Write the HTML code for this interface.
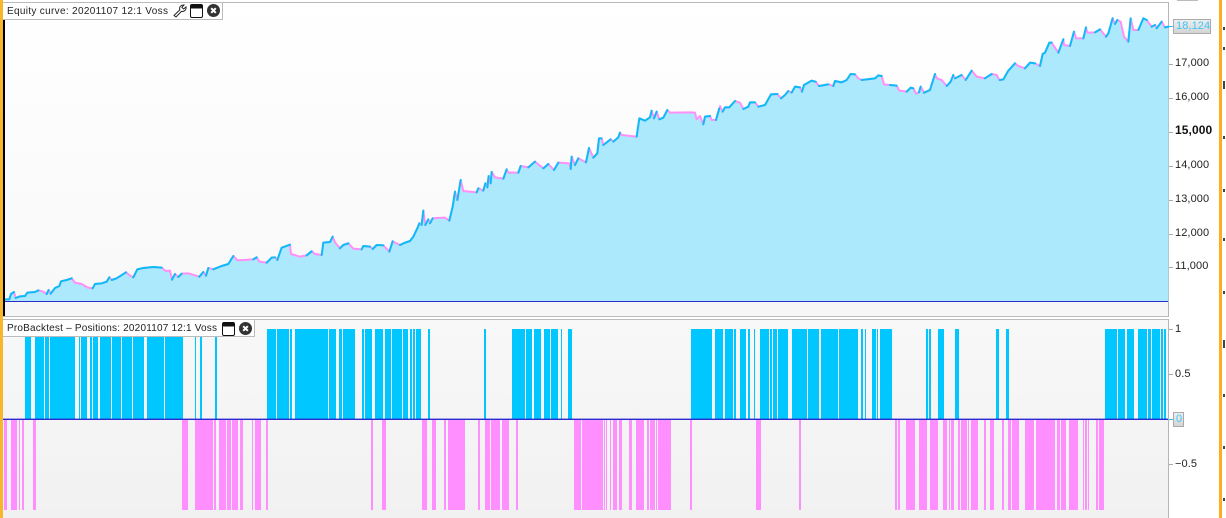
<!DOCTYPE html>
<html><head><meta charset="utf-8">
<style>
html,body{margin:0;padding:0;background:#fff}
body{width:1226px;height:518px;overflow:hidden;position:relative;font-family:"Liberation Sans",sans-serif;color:#222}
.a{position:absolute}
.t{position:absolute;left:1175px;font-size:11px;line-height:14px;letter-spacing:.1px;color:#222;white-space:nowrap}
.tick{position:absolute;left:1169px;width:4px;height:1px;background:#aaa}
.title{position:absolute;left:3px;height:16px;background:#fff;border-right:1px solid #bbb;border-bottom:1px solid #bbb;box-sizing:content-box}
.title span{position:absolute;left:4px;top:2px;font-size:10px;line-height:13px;color:#222;white-space:nowrap}
.m{position:absolute;left:1223px;width:2px;height:3px;background:#444}
</style></head><body>
<div class="a" style="left:0;top:0;width:3px;height:518px;background:#f8b62a"></div>
<div class="a" style="left:3px;top:2px;width:1165px;height:298px;background:linear-gradient(#fff,#f8f8f8)"></div>
<div class="a" style="left:3px;top:302px;width:1165px;height:14px;background:#f6f6f6"></div>
<div class="a" style="left:3px;top:320px;width:1165px;height:198px;background:linear-gradient(#f8f8f8,#f1f1f1)"></div>
<div class="a" style="left:3px;top:2px;width:1166px;height:1px;background:#bbb"></div>
<div class="a" style="left:3px;top:316px;width:1166px;height:1px;background:#bbb"></div>
<div class="a" style="left:3px;top:319px;width:1166px;height:1px;background:#bbb"></div>
<div class="a" style="left:1168px;top:2px;width:1px;height:315px;background:#b5b5b5"></div>
<div class="a" style="left:1168px;top:319px;width:1px;height:199px;background:#b5b5b5"></div>

<svg class="a" style="left:0;top:0" width="1226" height="518" viewBox="0 0 1226 518">
<g fill="#ade9fd" stroke="none">
<polygon transform="translate(0 180) scale(.33333)" points="15,363 15,358 28,358 33,342 42,336 47,354 60,349 75,348 82,338 105,336 115,331 130,335 140,342 146,330 152,341 165,324 178,318 183,304 200,300 215,295 225,308 245,312 262,322 278,325 285,312 305,310 320,305 328,292 335,300 350,295 378,277 392,288 400,292 412,268 430,264 460,261 485,263 497,273 510,272 516,299 525,282 535,291 545,281 565,280 598,290 610,276 618,287 625,264 640,268 665,258 685,252 700,228 712,241 760,238 770,232 778,245 800,248 815,233 825,232 832,240 845,203 870,194 873,222 900,230 920,226 935,214 945,222 965,225 970,188 990,186 998,170 1005,187 1020,205 1030,195 1045,190 1060,206 1085,208 1090,198 1110,200 1118,207 1130,195 1150,196 1168,215 1178,184 1200,195 1200,363"/>
<polygon transform="translate(400 80) scale(.33333)" points="0,663 0,495 15,488 30,483 40,470 52,445 58,430 65,435 70,392 76,435 85,418 90,430 98,415 110,414 135,413 148,422 158,380 165,335 172,360 178,325 182,300 190,333 230,337 235,325 250,332 256,310 262,322 266,288 272,310 275,276 285,292 310,296 320,268 325,278 355,278 362,258 385,262 405,245 430,265 445,252 462,270 475,248 508,250 512,267 515,230 525,255 535,235 558,247 567,204 580,233 592,220 597,175 605,175 610,195 632,178 640,185 655,172 660,158 665,165 692,168 710,170 718,115 735,122 750,112 755,92 762,115 770,95 778,118 790,113 802,90 810,98 870,97 885,98 890,118 900,108 910,133 915,110 930,108 935,120 948,120 958,85 960,85 960,663"/>
<polygon transform="translate(720 50) scale(.33333)" points="0,753 0,168 8,185 15,172 28,172 45,153 60,158 70,177 85,170 90,157 105,157 115,170 135,165 153,133 172,132 183,145 195,135 205,123 215,128 225,110 240,112 246,125 252,105 275,92 287,95 297,108 325,103 340,108 345,93 365,97 380,90 392,72 405,73 415,85 425,90 465,85 475,76 485,78 492,103 510,105 530,107 538,122 560,125 572,113 580,115 588,131 597,127 602,110 612,128 630,120 645,72 650,85 665,90 680,108 692,95 700,75 705,85 725,75 737,90 755,62 770,80 795,85 815,72 830,75 838,90 840,90 840,753"/>
<polygon transform="translate(1000 0) scale(.33333)" points="0,903 0,240 10,238 25,212 45,190 55,198 75,205 90,188 105,190 120,198 128,162 135,158 148,128 155,128 175,158 190,118 192,135 210,138 222,95 228,115 250,115 258,82 262,98 285,97 300,88 318,110 325,100 338,55 345,72 352,60 362,65 372,110 385,125 392,55 400,90 415,90 430,55 440,60 455,80 465,75 470,85 485,65 495,82 505,80 505,903"/>
</g>
<g fill="none" stroke-width="6" stroke-linejoin="round" stroke-linecap="round">
<g transform="translate(0 180) scale(.33333)">
<polyline stroke="#ff90f6" points="15,358 28,358 33,342 42,336 47,354 60,349 75,348 82,338 105,336 115,331 130,335 140,342 146,330 152,341 165,324 178,318 183,304 200,300 215,295 225,308 245,312 262,322 278,325 285,312 305,310 320,305 328,292 335,300 350,295 378,277 392,288 400,292 412,268 430,264 460,261 485,263 497,273 510,272 516,299 525,282 535,291 545,281 565,280 598,290 610,276 618,287 625,264 640,268 665,258 685,252 700,228 712,241 760,238 770,232 778,245 800,248 815,233 825,232 832,240 845,203 870,194 873,222 900,230 920,226 935,214 945,222 965,225 970,188 990,186 998,170 1005,187 1020,205 1030,195 1045,190 1060,206 1085,208 1090,198 1110,200 1118,207 1130,195 1150,196 1168,215 1178,184 1200,195"/>
<path stroke="#0cbcf7" d="M15 358L28 358L33 342L42 336M47 354L60 349L75 348L82 338L105 336L115 331M140 342L146 330M152 341L165 324L178 318L183 304L200 300L215 295M278 325L285 312L305 310L320 305L328 292M335 300L350 295L378 277M400 292L412 268L430 264L460 261L485 263M516 299L525 282M535 291L545 281M598 290L610 276M618 287L625 264M640 268L665 258L685 252L700 228M760 238L770 232M800 248L815 233L825 232M832 240L845 203L870 194M920 226L935 214M965 225L970 188L990 186L998 170M1020 205L1030 195L1045 190M1085 208L1090 198L1110 200M1118 207L1130 195L1150 196M1168 215L1178 184"/>
</g>
<g transform="translate(400 80) scale(.33333)">
<polyline stroke="#ff90f6" points="0,495 15,488 30,483 40,470 52,445 58,430 65,435 70,392 76,435 85,418 90,430 98,415 110,414 135,413 148,422 158,380 165,335 172,360 178,325 182,300 190,333 230,337 235,325 250,332 256,310 262,322 266,288 272,310 275,276 285,292 310,296 320,268 325,278 355,278 362,258 385,262 405,245 430,265 445,252 462,270 475,248 508,250 512,267 515,230 525,255 535,235 558,247 567,204 580,233 592,220 597,175 605,175 610,195 632,178 640,185 655,172 660,158 665,165 692,168 710,170 718,115 735,122 750,112 755,92 762,115 770,95 778,118 790,113 802,90 810,98 870,97 885,98 890,118 900,108 910,133 915,110 930,108 935,120 948,120 958,85"/>
<path stroke="#0cbcf7" d="M0 495L15 488L30 483L40 470L52 445L58 430M65 435L70 392M76 435L85 418M90 430L98 415M148 422L158 380L165 335M172 360L178 325L182 300M230 337L235 325M250 332L256 310M262 322L266 288M272 310L275 276M310 296L320 268M355 278L362 258M385 262L405 245M430 265L445 252M462 270L475 248M512 267L515 230M525 255L535 235M558 247L567 204M580 233L592 220L597 175L605 175M610 195L632 178M640 185L655 172L660 158M710 170L718 115L735 122L750 112L755 92M762 115L770 95M778 118L790 113L802 90M910 133L915 110L930 108M948 120L958 85"/>
</g>
<g transform="translate(720 50) scale(.33333)">
<polyline stroke="#ff90f6" points="0,168 8,185 15,172 28,172 45,153 60,158 70,177 85,170 90,157 105,157 115,170 135,165 153,133 172,132 183,145 195,135 205,123 215,128 225,110 240,112 246,125 252,105 275,92 287,95 297,108 325,103 340,108 345,93 365,97 380,90 392,72 405,73 415,85 425,90 465,85 475,76 485,78 492,103 510,105 530,107 538,122 560,125 572,113 580,115 588,131 597,127 602,110 612,128 630,120 645,72 650,85 665,90 680,108 692,95 700,75 705,85 725,75 737,90 755,62 770,80 795,85 815,72 830,75 838,90"/>
<path stroke="#0cbcf7" d="M8 185L15 172L28 172L45 153M70 177L85 170L90 157L105 157M115 170L135 165L153 133L172 132M183 145L195 135L205 123M215 128L225 110L240 112M246 125L252 105L275 92L287 95M297 108L325 103M340 108L345 93L365 97L380 90L392 72L405 73M425 90L465 85L475 76L485 78M510 105L530 107M560 125L572 113L580 115M597 127L602 110M612 128L630 120L645 72M680 108L692 95L700 75M705 85L725 75M737 90L755 62M795 85L815 72"/>
</g>
<g transform="translate(1000 0) scale(.33333)">
<polyline stroke="#ff90f6" points="0,240 10,238 25,212 45,190 55,198 75,205 90,188 105,190 120,198 128,162 135,158 148,128 155,128 175,158 190,118 192,135 210,138 222,95 228,115 250,115 258,82 262,98 285,97 300,88 318,110 325,100 338,55 345,72 352,60 362,65 372,110 385,125 392,55 400,90 415,90 430,55 440,60 455,80 465,75 470,85 485,65 495,82 505,80"/>
<path stroke="#0cbcf7" d="M0 240L10 238L25 212L45 190M75 205L90 188L105 190M120 198L128 162L135 158L148 128L155 128M175 158L190 118M210 138L222 95M250 115L258 82M285 97L300 88M318 110L325 100L338 55M345 72L352 60M385 125L392 55M415 90L430 55L440 60M455 80L465 75M470 85L485 65M495 82L505 80"/>
</g>
</g>
<rect x="3" y="301" width="1165" height="1" fill="#2b2bd0"/>
<path fill="none" stroke="#00c7ff" stroke-width="90" shape-rendering="crispEdges" d="M25 374H31M35 374H44M45 374H49M50 374H75M79 374H80M81 374H87M90 374H92M93 374H98M100 374H111M112 374H121M122 374H132M133 374H144M147 374H164M165 374H183M195 374H196M200 374H202M215 374H217M267 374H276M277 374H289M290 374H292M295 374H328M329 374H336M339 374H342M343 374H355M362 374H364M365 374H372M375 374H383M385 374H391M392 374H402M403 374H408M410 374H412M413 374H415M416 374H421M428 374H430M484 374H486M512 374H525M526 374H532M534 374H541M544 374H550M551 374H558M561 374H562M568 374H572M691 374H712M715 374H723M725 374H733M734 374H736M740 374H746M748 374H750M754 374H755M760 374H769M770 374H772M773 374H777M778 374H788M792 374H807M808 374H819M821 374H838M839 374H858M861 374H863M865 374H866M872 374H876M877 374H878M880 374H892M926 374H928M929 374H931M938 374H944M955 374H959M996 374H999M1006 374H1009M1105 374H1117M1118 374H1125M1127 374H1134M1138 374H1147M1148 374H1151M1152 374H1160M1161 374H1163M1164 374H1166"/>
<path fill="none" stroke="#ff8fff" stroke-width="90" shape-rendering="crispEdges" d="M4 465H7M11 465H17M19 465H20M22 465H24M33 465H36M182 465H188M195 465H213M214 465H216M219 465H226M227 465H231M232 465H238M240 465H243M252 465H253M255 465H261M266 465H268M371 465H373M382 465H386M422 465H427M432 465H436M444 465H446M448 465H465M478 465H480M485 465H490M491 465H500M502 465H509M516 465H518M574 465H581M582 465H603M604 465H605M606 465H607M610 465H611M613 465H617M619 465H622M629 465H632M636 465H644M647 465H649M650 465H655M656 465H657M658 465H671M690 465H692M756 465H761M799 465H801M895 465H897M898 465H900M906 465H915M919 465H927M930 465H938M943 465H947M949 465H950M951 465H954M958 465H960M961 465H967M968 465H969M971 465H978M984 465H986M990 465H994M1002 465H1004M1008 465H1011M1012 465H1019M1025 465H1034M1036 465H1055M1057 465H1060M1061 465H1066M1069 465H1078M1083 465H1084M1085 465H1087M1088 465H1089M1096 465H1098M1099 465H1104"/>
<rect x="3" y="418.6" width="1165" height="1.4" fill="#2b2bd0"/>
</svg>

<div class="a" style="left:3px;top:19px;width:2px;height:297px;background:#000"></div>

<div class="title" style="top:3px;width:219px"><span style="letter-spacing:.32px">Equity curve: 20201107 12:1 Voss</span>
<svg class="a" style="left:170px;top:1px" width="14" height="14" viewBox="0 0 14 14"><path d="M1 11.5L6.8 5.8C6 3 8 .6 11 1L8.9 3.3L10.6 5L13 3C13.5 6 11 8 8.4 7.4L3 13Z" fill="#fff" stroke="#222" stroke-width="1"/></svg>
<svg class="a" style="left:187px;top:1px" width="13" height="14" viewBox="0 0 13 14"><rect x=".5" y=".5" width="12" height="13" rx="1.5" fill="#fff" stroke="#111"/><rect x=".5" y=".5" width="12" height="4" rx="1" fill="#111"/></svg>
<svg class="a" style="left:204px;top:1px" width="13" height="13" viewBox="0 0 13 13"><circle cx="6.5" cy="6.5" r="6.5" fill="#333"/><path d="M4.2 4.2L8.8 8.8M8.8 4.2L4.2 8.8" stroke="#fff" stroke-width="2"/></svg>
</div>

<div class="title" style="top:320px;width:251px"><span style="letter-spacing:.2px">ProBacktest – Positions: 20201107 12:1 Voss</span>
<svg class="a" style="left:219px;top:2px" width="13" height="14" viewBox="0 0 13 14"><rect x=".5" y=".5" width="12" height="13" rx="1.5" fill="#fff" stroke="#111"/><rect x=".5" y=".5" width="12" height="4" rx="1" fill="#111"/></svg>
<svg class="a" style="left:236px;top:2px" width="13" height="13" viewBox="0 0 13 13"><circle cx="6.5" cy="6.5" r="6.5" fill="#333"/><path d="M4.2 4.2L8.8 8.8M8.8 4.2L4.2 8.8" stroke="#fff" stroke-width="2"/></svg>
</div>

<div class="tick" style="top:64px"></div><div class="t" style="top:56px">17,000</div>
<div class="tick" style="top:98px"></div><div class="t" style="top:90px">16,000</div>
<div class="tick" style="top:132px"></div><div class="t" style="top:123px;font-weight:bold;font-size:12px;color:#111">15,000</div>
<div class="tick" style="top:166px"></div><div class="t" style="top:158px">14,000</div>
<div class="tick" style="top:200px"></div><div class="t" style="top:192px">13,000</div>
<div class="tick" style="top:234px"></div><div class="t" style="top:226px">12,000</div>
<div class="tick" style="top:267px"></div><div class="t" style="top:259px">11,000</div>

<div class="tick" style="top:26px;background:#22c4f8"></div>
<div class="a" style="left:1173px;top:19px;width:34px;height:13px;border:1px solid #aaa;background:linear-gradient(#eee,#d4d4d4);color:#3cc6f7;font-size:11px;line-height:13px;padding-left:2px;letter-spacing:.1px">18,124</div>

<div class="tick" style="top:329px"></div><div class="t" style="top:322px">1</div>
<div class="tick" style="top:374px"></div><div class="t" style="top:367px">0.5</div>
<div class="tick" style="top:419px;background:#22c4f8"></div>
<div class="a" style="left:1173px;top:412px;width:7px;height:13px;border:1px solid #aaa;background:linear-gradient(#eee,#d4d4d4);color:#3cc6f7;font-size:11px;line-height:13px;padding-left:2px">0</div>
<div class="tick" style="top:464px"></div><div class="t" style="top:457px">−0.5</div>

<div class="a" style="left:1177px;top:0;width:21px;height:1px;background:#bbb"></div>
<div class="a" style="left:1219px;top:0;width:3px;height:518px;background:#fdae1e"></div>
<div class="m" style="top:27px"></div><div class="m" style="top:47px"></div>
<div class="m" style="top:81px;height:8px"></div><div class="m" style="top:136px"></div>
<div class="m" style="top:189px"></div><div class="m" style="top:238px"></div>
<div class="m" style="top:291px"></div><div class="m" style="top:340px;height:8px"></div>
<div class="m" style="top:394px"></div><div class="m" style="top:446px"></div><div class="m" style="top:498px"></div>
</body></html>
